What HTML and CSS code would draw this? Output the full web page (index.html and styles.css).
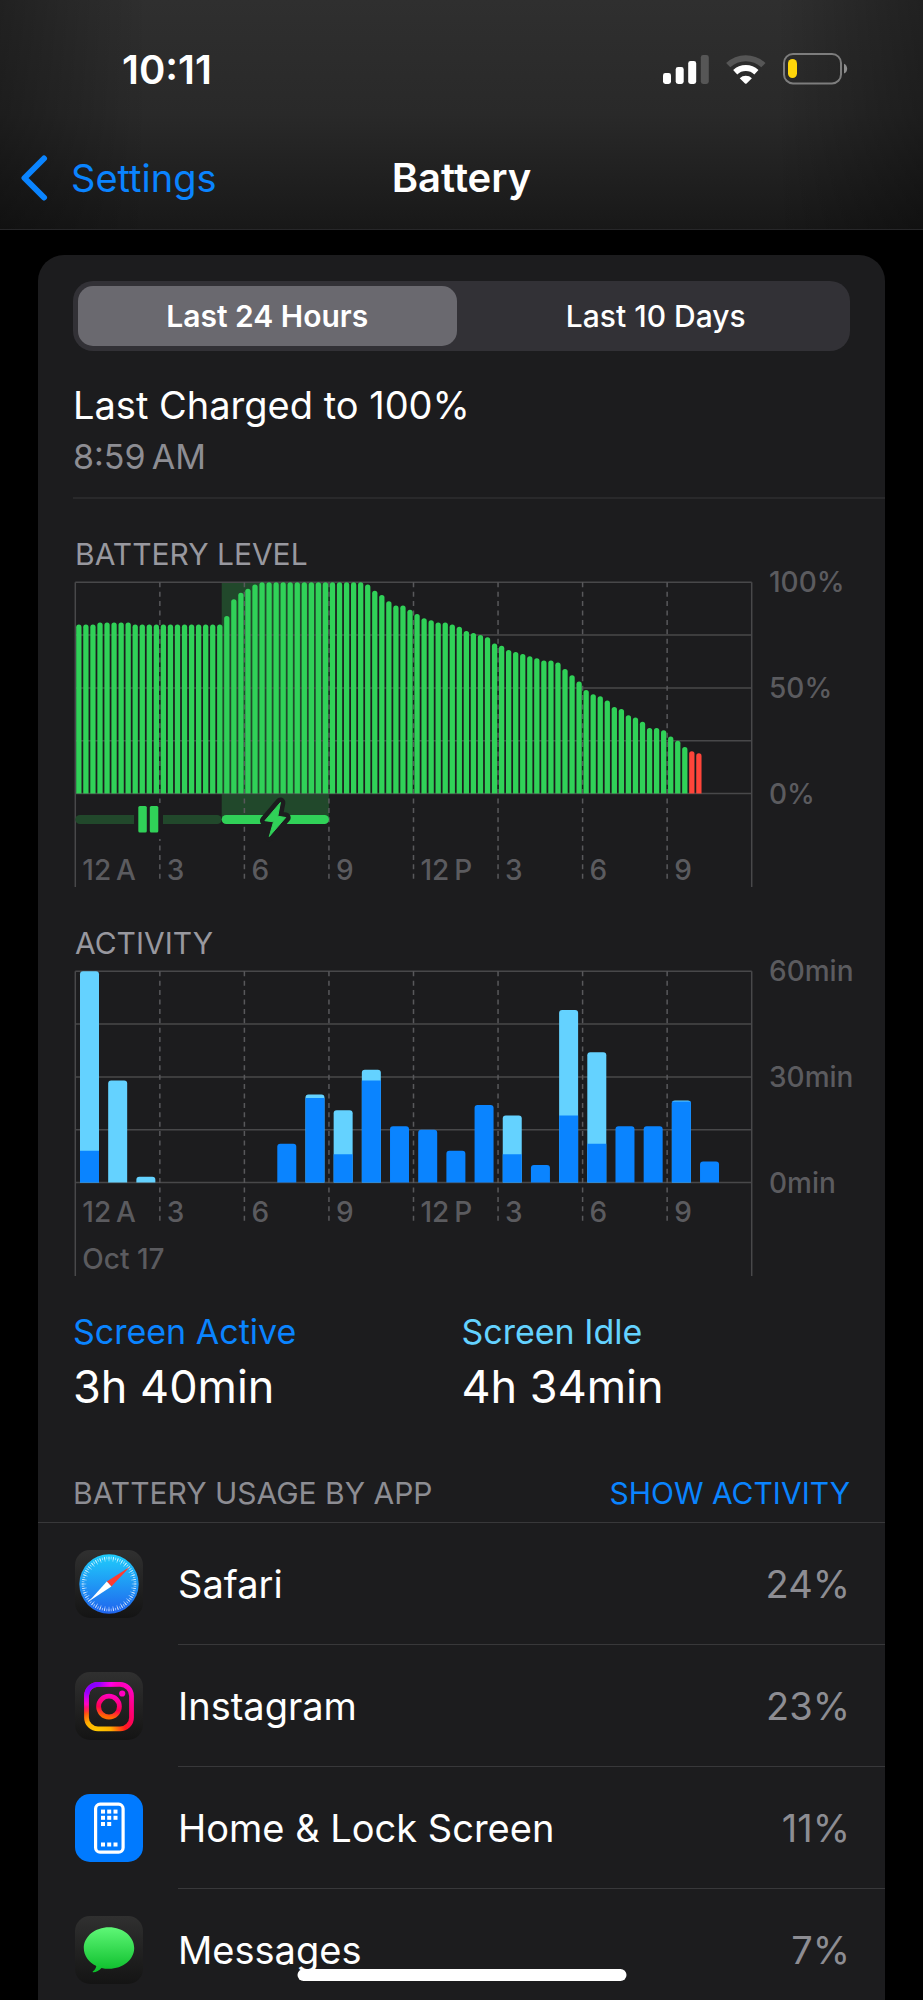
FILE: index.html
```html
<!DOCTYPE html>
<html lang="en">
<head>
  <meta charset="UTF-8">
  <meta name="viewport" content="width=device-width, initial-scale=1.0">
  <title>Battery</title>
  <link rel="stylesheet" href="styles.css">
</head>
<body>
  <div class="screen">
    <header class="top">
      <div class="status">
        <span class="time">10:11</span>
        <div class="status-icons">
          <svg width="46" height="30" viewBox="0 0 46 30" aria-hidden="true">
            <g fill="#fff">
              <rect x="0" y="19" width="8" height="11" rx="2.4"/>
              <rect x="12.7" y="13" width="8" height="17" rx="2.4"/>
              <rect x="25.2" y="7" width="8" height="23" rx="2.4"/>
            </g>
            <rect x="37.8" y="1" width="8" height="29" rx="2.4" fill="#565656"/>
          </svg>
          <svg width="40" height="30" viewBox="0 0 40 30" aria-hidden="true">
            <path d="M2.2 11.2A25.5 25.5 0 0 1 37.4 11.2" fill="none" stroke="#565656" stroke-width="6"/>
            <path d="M9.2 18.2A15.5 15.5 0 0 1 30.4 18.2" fill="none" stroke="#fff" stroke-width="6"/>
            <path d="M13.7 24.2A8.8 8.8 0 0 1 25.9 24.2L20.6 29.4Q19.8 30.2 19 29.4Z" fill="#fff"/>
          </svg>
          <svg width="65" height="32" viewBox="0 0 65 32" aria-hidden="true">
            <rect x="1" y="1" width="57" height="29.4" rx="9" fill="none" stroke="#7d7d7d" stroke-width="2"/>
            <path d="M61 10.8C65.2 12.5 65.2 18.9 61 20.6Z" fill="#8d8d8d"/>
            <rect x="5" y="6" width="9" height="19" rx="4.5" fill="#ffd60a"/>
          </svg>
        </div>
      </div>
      <nav class="nav">
        <a class="back" href="#settings">
          <svg width="28" height="46" viewBox="0 0 28 46" aria-hidden="true">
            <path d="M23 3.5L3.5 23L23 42.5" fill="none" stroke="#0a84ff" stroke-width="6" stroke-linecap="round" stroke-linejoin="round"/>
          </svg>
          Settings
        </a>
        <h1 class="title">Battery</h1>
      </nav>
    </header>

    <main class="card">
      <div class="segmented">
        <button type="button" class="segment selected" aria-pressed="true">Last 24 Hours</button>
        <button type="button" class="segment" aria-pressed="false">Last 10 Days</button>
      </div>

      <section class="charged">
        <p class="charged-title">Last Charged to 100%</p>
        <p class="charged-time">8:59&#8239;AM</p>
      </section>

      <section class="chart">
        <h2 class="caption">BATTERY LEVEL</h2>
        <svg id="levelChart" viewBox="0 0 812 317" role="img" aria-label="Battery level"></svg>
      </section>

      <section class="chart">
        <h2 class="caption">ACTIVITY</h2>
        <svg id="activityChart" viewBox="0 0 812 317" role="img" aria-label="Activity"></svg>
      </section>

      <section class="totals">
        <div>
          <p class="total-label active">Screen Active</p>
          <p class="total-value">3h 40min</p>
        </div>
        <div>
          <p class="total-label idle">Screen Idle</p>
          <p class="total-value">4h 34min</p>
        </div>
      </section>

      <section>
        <div class="usage-head">
          <h2 class="usage-title">BATTERY USAGE BY APP</h2>
          <button type="button" class="show">SHOW ACTIVITY</button>
        </div>
        <ul class="apps">
          <li class="app">
            <svg class="icon" viewBox="0 0 68 68" aria-hidden="true">
              <defs>
                <linearGradient id="tile" x1="0" y1="0" x2="0" y2="1">
                  <stop offset="0" stop-color="#303030"/>
                  <stop offset="1" stop-color="#141414"/>
                </linearGradient>
                <linearGradient id="sky" x1="0" y1="0" x2="0" y2="1">
                  <stop offset="0" stop-color="#1fcdfb"/>
                  <stop offset="1" stop-color="#2064ee"/>
                </linearGradient>
              </defs>
              <rect width="68" height="68" rx="15" fill="url(#tile)"/>
              <circle cx="34" cy="34" r="29.7" fill="url(#sky)"/>
              <circle cx="34" cy="34" r="26" fill="none" stroke="#fff" stroke-opacity=".65" stroke-width="2.6" pathLength="72" stroke-dasharray=".35 .65" stroke-dashoffset=".17"/>
              <circle cx="34" cy="34" r="25" fill="none" stroke="#fff" stroke-opacity=".6" stroke-width="4.6" pathLength="36" stroke-dasharray=".18 .82" stroke-dashoffset=".09"/>
              <path d="M55 16.7L31.8 31.6L36.4 36.4Z" fill="#ff3b30"/>
              <path d="M14 51.3L31.8 31.6L36.4 36.4Z" fill="#fff"/>
            </svg>
            <div class="app-row">
              <span>Safari</span>
              <span class="share">24%</span>
            </div>
          </li>
          <li class="app">
            <svg class="icon" viewBox="0 0 68 68" aria-hidden="true">
              <defs>
                <radialGradient id="warm" gradientUnits="userSpaceOnUse" cx="22" cy="62" r="58">
                  <stop offset="0" stop-color="#ffd000"/>
                  <stop offset=".25" stop-color="#ffae00"/>
                  <stop offset=".5" stop-color="#ff1a1a"/>
                  <stop offset=".65" stop-color="#ff0064"/>
                  <stop offset="1" stop-color="#ff00c8"/>
                </radialGradient>
                <radialGradient id="violet" gradientUnits="userSpaceOnUse" cx="14" cy="10" r="32">
                  <stop offset="0" stop-color="#7300ff"/>
                  <stop offset=".35" stop-color="#9a00ff"/>
                  <stop offset=".7" stop-color="#f0f" stop-opacity=".7"/>
                  <stop offset="1" stop-color="#f0c" stop-opacity="0"/>
                </radialGradient>
                <linearGradient id="lens" x1=".6" y1="0" x2=".4" y2="1">
                  <stop offset="0" stop-color="#ff00b8"/>
                  <stop offset=".6" stop-color="#ff0050"/>
                  <stop offset="1" stop-color="#ff6a00"/>
                </linearGradient>
              </defs>
              <rect width="68" height="68" rx="15" fill="url(#tile)"/>
              <g fill="none" stroke-width="4.8">
                <rect x="11.5" y="12.4" width="45" height="44.5" rx="11.5" stroke="url(#warm)"/>
                <rect x="11.5" y="12.4" width="45" height="44.5" rx="11.5" stroke="url(#violet)"/>
                <circle cx="34" cy="34.6" r="10.4" stroke="url(#lens)"/>
              </g>
              <circle cx="47.2" cy="21.5" r="3.1" fill="#ff00c0"/>
            </svg>
            <div class="app-row">
              <span>Instagram</span>
              <span class="share">23%</span>
            </div>
          </li>
          <li class="app">
            <svg class="icon" viewBox="0 0 68 68" aria-hidden="true">
              <rect width="68" height="68" rx="15" fill="#007aff"/>
              <rect x="20.6" y="10.2" width="27.5" height="48" rx="4.5" fill="none" stroke="#fff" stroke-width="3.2"/>
              <g fill="#fff">
                <rect x="26" y="15.6" width="4" height="4"/><rect x="32.2" y="15.6" width="4" height="4"/><rect x="38.5" y="15.6" width="4" height="4"/>
                <rect x="26" y="21.8" width="4" height="4"/><rect x="32.2" y="21.8" width="4" height="4"/><rect x="38.5" y="21.8" width="4" height="4"/>
                <rect x="26" y="28" width="4" height="4"/><rect x="32.2" y="28" width="4" height="4"/>
                <rect x="26" y="48.5" width="4" height="4"/><rect x="32.2" y="48.5" width="4" height="4"/><rect x="38.5" y="48.5" width="4" height="4"/>
              </g>
            </svg>
            <div class="app-row">
              <span>Home &amp; Lock Screen</span>
              <span class="share">11%</span>
            </div>
          </li>
          <li class="app">
            <svg class="icon" viewBox="0 0 68 68" aria-hidden="true">
              <defs>
                <linearGradient id="bubble" x1="0" y1="0" x2="0" y2="1">
                  <stop offset="0" stop-color="#5ff777"/>
                  <stop offset="1" stop-color="#0bbd2a"/>
                </linearGradient>
              </defs>
              <rect width="68" height="68" rx="15" fill="url(#tile)"/>
              <path d="M34 11.2C48 11.2 59.2 20.5 59.2 32C59.2 43.5 48 52.8 34 52.8C31.3 52.8 28.8 52.5 26.5 51.9C24.2 54.5 21 56.3 18.2 56.2C17.6 56.2 17.5 55.6 18 55.2C19.8 53.7 21 52 21.3 49.9C13.7 46.3 8.8 39.6 8.8 32C8.8 20.5 20 11.2 34 11.2Z" fill="url(#bubble)"/>
            </svg>
            <div class="app-row">
              <span>Messages</span>
              <span class="share">7%</span>
            </div>
          </li>
        </ul>
      </section>
    </main>
    <div class="home-bar"></div>
  </div>

  <script src="script.js"></script>
</body>
</html>
```
FILE: styles.css
```css
* {
  box-sizing: border-box;
}
body {
  margin: 0;
  background-color: #000;
  color: #fff;
  font-family: Inter, "Liberation Sans", sans-serif;
  font-size: 38px;
}
h1, h2, p, ul {
  margin: 0;
  padding: 0;
  font-weight: 400;
}
svg {
  display: block;
}
button {
  border: none;
  background: none;
  color: inherit;
  font-family: inherit;
  cursor: pointer;
}
.screen {
  height: 100vh;
  overflow: hidden;
}

/* header */
.top {
  height: 230px;
  background: linear-gradient(to right, rgba(0, 0, 0, 0.3), transparent 16%, transparent 84%, rgba(0, 0, 0, 0.3)),
    linear-gradient(#2f2f2f, #292929 50%, #181818);
  border-bottom: 1px solid #272729;
}
.status {
  display: flex;
  justify-content: space-between;
  align-items: center;
  height: 138px;
  padding: 0 75px 0 122px;
}
.time {
  font-size: 40px;
  font-weight: 600;
}
.status-icons {
  display: flex;
  align-items: center;
  gap: 17px;
}
.nav {
  display: grid;
  grid-template-columns: 1fr auto 1fr;
  align-items: center;
  height: 79px;
  padding: 0 21px;
}
.back {
  display: flex;
  align-items: center;
  gap: 22px;
  color: #0a84ff;
  text-decoration: none;
}
.title {
  font-size: 40px;
  font-weight: 600;
}

/* card */
.card {
  min-height: 100%;
  margin: 25px 38px 0;
  padding: 26px 0 0 35px;
  border-radius: 26px 26px 0 0;
  background-color: #1c1c1e;
}
.segmented {
  display: grid;
  grid-template-columns: 1fr 1fr;
  gap: 10px;
  height: 70px;
  margin-right: 35px;
  padding: 5px;
  border-radius: 20px;
  background-color: #323136;
}
.segment {
  border-radius: 15px;
  font-size: 30px;
  font-weight: 500;
}
.segment.selected {
  background-color: #6a696f;
  font-weight: 600;
}
.charged {
  padding: 29px 0 13px;
  border-bottom: 2px solid #29292b;
}
.charged-title {
  line-height: 50px;
}
.charged-time {
  color: #8d8d93;
  font-size: 34px;
  line-height: 54px;
}

/* charts */
.chart {
  margin-top: 38px;
}
.chart svg {
  width: 100%;
  overflow: visible;
}
.caption {
  padding-left: 2px;
  color: #98989f;
  font-size: 30px;
  line-height: 34px;
}
.grid-line {
  stroke: #48484a;
  stroke-width: 1.5;
}
.dash-line {
  stroke: #58585b;
  stroke-width: 1.5;
  stroke-dasharray: 5 4.4;
}
.tick-label {
  fill: #5b5b5f;
  font-size: 28px;
  font-weight: 500;
}
.bar-level {
  fill: #30d158;
}
.bar-low {
  fill: #ff453a;
}
.bar-active {
  fill: #0a84ff;
}
.bar-idle {
  fill: #64d2ff;
}
.charge-shade {
  fill: #21482b;
}
.bolt {
  fill: #30d158;
  stroke: #30d158;
  stroke-linejoin: round;
}
.bolt-edge {
  fill: #1c1c1e;
  stroke: #1c1c1e;
  stroke-width: 10;
  stroke-linejoin: round;
}

/* totals */
.totals {
  display: grid;
  grid-template-columns: 1fr 1fr;
  margin: 33px 35px 0 0;
}
.total-label {
  font-size: 34px;
  line-height: 44px;
}
.total-label.active {
  color: #0a84ff;
}
.total-label.idle {
  color: #64d2ff;
}
.total-value {
  font-size: 45px;
  line-height: 66px;
}

/* usage list */
.usage-head {
  display: flex;
  justify-content: space-between;
  align-items: center;
  margin: 56px 0 0 -35px;
  padding: 0 35px 12px;
  border-bottom: 1px solid #38383a;
}
.usage-title {
  color: #8d8d93;
  font-size: 30px;
  line-height: 34px;
}
.show {
  padding: 0;
  color: #0a84ff;
  font-size: 30px;
  line-height: 34px;
}
.apps {
  list-style: none;
}
.app {
  display: flex;
  align-items: center;
  gap: 35px;
  padding-left: 2px;
}
.icon {
  flex: none;
  width: 68px;
  height: 68px;
}
.app-row {
  display: flex;
  flex: 1;
  justify-content: space-between;
  align-items: center;
  height: 122px;
  padding-right: 35px;
  border-bottom: 1px solid #38383a;
}
.share {
  color: #8d8d93;
}
.home-bar {
  position: fixed;
  bottom: 19px;
  left: 50%;
  width: 329px;
  height: 12px;
  border-radius: 6px;
  background-color: #fff;
  transform: translateX(-50%);
}
```
FILE: script.js
```js
// Plot area inside the 812 x 317 chart
var LEFT = 2.3;
var RIGHT = 678.7;
var TOP = 11.3;
var BOTTOM = 222.5;
var HEIGHT = BOTTOM - TOP;
var HOUR = (RIGHT - LEFT) / 24;

// one value per 15 minutes, in percent
var levels = [
  80, 80, 80, 81, 81, 81, 81, 81, 80, 80, 80, 80, 80, 80, 80, 80, 80, 80, 80, 80, 80,
  84, 92, 95, 97, 99, 100, 100, 100, 100, 100, 100, 100, 100, 100, 100, 100, 100, 100, 100, 100,
  99, 96, 94, 91, 89, 89, 87, 85, 83, 82, 81, 81, 80, 79, 77, 76, 75, 74, 71,
  70, 68, 67, 66, 65, 64, 63, 63, 62, 59, 56, 53, 49, 47, 46, 44, 41, 40, 37, 36, 34,
  31, 31, 30, 27, 25, 22, 20, 19
];

// [active, total] minutes per hour
var activity = [
  [9, 60], [0, 29], [0, 1.6], [0, 0], [0, 0], [0, 0], [0, 0], [11, 11],
  [24, 25], [8, 20.5], [29, 32], [16, 16], [15, 15], [9, 9], [22, 22], [8, 19],
  [5, 5], [19, 49], [11, 37], [16, 16], [16, 16], [23, 23.3], [6, 6]
];

var hours = ['12\u202fA', '3', '6', '9', '12\u202fP', '3', '6', '9'];

function line(cls, x1, y1, x2, y2) {
  return '<line class="' + cls + '" x1="' + x1 + '" y1="' + y1 + '" x2="' + x2 + '" y2="' + y2 + '"/>';
}

function text(x, y, value) {
  return '<text class="tick-label" x="' + x + '" y="' + y + '">' + value + '</text>';
}

function rect(cls, x, y, w, h, r) {
  return '<rect class="' + cls + '" x="' + x + '" y="' + y + '" width="' + w + '" height="' + h + '" rx="' + r + '"/>';
}

// bar with rounded top corners and a flat foot
function bar(cls, x, w, h, r) {
  r = Math.min(r, h);
  return '<path class="' + cls + '" d="M' + x + ' ' + BOTTOM + 'v' + (r - h) +
    'q0 ' + -r + ' ' + r + ' ' + -r + 'h' + (w - 2 * r) +
    'q' + r + ' 0 ' + r + ' ' + r + 'V' + BOTTOM + 'z"/>';
}

function grid(dashEnd, labelY, scale) {
  var out = '';
  for (var i = 0; i <= 4; i++) {
    var y = TOP + HEIGHT * i / 4;
    out += line('grid-line', LEFT, y, RIGHT, y);
  }
  out += line('grid-line', LEFT, TOP, LEFT, 316);
  out += line('grid-line', RIGHT, TOP, RIGHT, 316);
  for (var h = 0; h < 8; h++) {
    var x = LEFT + HOUR * 3 * h;
    if (h > 0) out += line('dash-line', x, TOP, x, dashEnd);
    out += text(x + 7, labelY, hours[h]);
  }
  for (var s = 0; s < 3; s++) {
    out += text(696, TOP + HEIGHT * s / 2 + 10, scale[s]);
  }
  return out;
}

function drawLevel() {
  var step = HOUR / 4;
  var start = 148.7;
  var end = LEFT + HOUR * 9;
  var out = rect('charge-shade', start, TOP, end - start, 237, 0);
  out += grid(312, 309, ['100%', '50%', '0%']);
  levels.forEach(function (level, i) {
    out += bar(level > 20 ? 'bar-level' : 'bar-low', LEFT + step * i + 0.9, 5.3, HEIGHT * level / 100, 2.6);
  });
  // charging track with pause and bolt marks
  out += rect('charge-shade', LEFT, 244, start - LEFT, 9, 4.5);
  out += rect('bar-level', start, 244, end - start, 9, 4.5);
  out += '<rect x="61" y="232" width="29" height="36" fill="#1c1c1e"/>';
  out += rect('bar-level', 65.3, 235, 8.5, 26.5, 1.5);
  out += rect('bar-level', 76.8, 235, 8.5, 26.5, 1.5);
  var bolt = 'M207.4 231.5L191.9 249.7L200.5 250.8L196.3 265.5L212.7 246.5L204.8 245.2Z';
  out += '<path class="bolt-edge" d="' + bolt + '"/>';
  out += '<path class="bolt" d="' + bolt + '"/>';
  document.getElementById('levelChart').innerHTML = out;
}

function drawActivity() {
  var out = grid(264, 262, ['60min', '30min', '0min']);
  activity.forEach(function (item, i) {
    var x = LEFT + HOUR * i + 4.7;
    var total = HEIGHT * item[1] / 60;
    var active = HEIGHT * item[0] / 60;
    if (item[1] > item[0]) out += bar('bar-idle', x, 19, total, 3);
    if (active) out += bar('bar-active', x, 19, active, item[1] > item[0] ? 0 : 3);
  });
  out += text(LEFT + 7, 309, 'Oct 17');
  document.getElementById('activityChart').innerHTML = out;
}

drawLevel();
drawActivity();
```
